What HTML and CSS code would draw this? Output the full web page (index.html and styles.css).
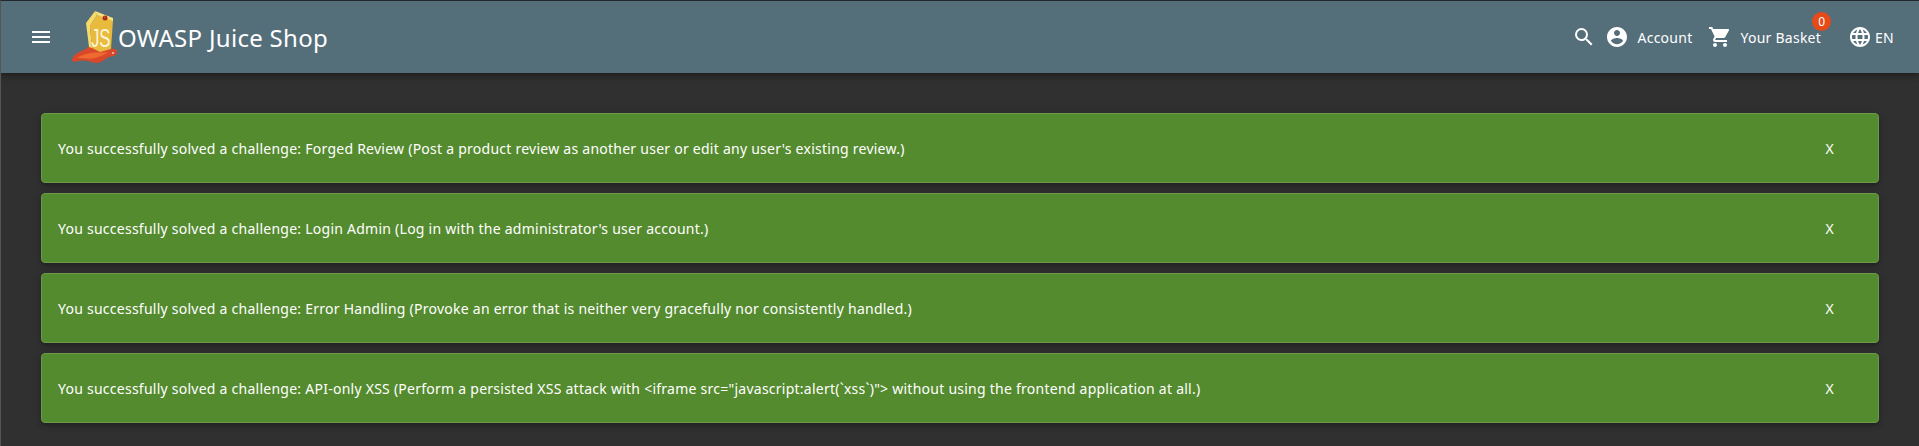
FILE: index.html
```html
<!DOCTYPE html>
<html lang="en">
<head>
    <meta charset="UTF-8">
    <title>OWASP Juice Shop</title>
    <link rel="stylesheet" href="styles.css">
</head>
<body>
<header class="toolbar">
    <button class="menu-btn" aria-label="Open sidenav">
        <svg class="icon" viewBox="0 0 24 24"><path d="M3 18h18v-2H3v2zm0-5h18v-2H3v2zm0-7v2h18V6H3z"/></svg>
    </button>
    <a class="brand">
        <svg class="logo" viewBox="70 9 48 56">
            <path d="M72 60c1-5 6-8 12-10 3-2 5-4 8-3l8 3 12-1c3-1 5 0 5 3s-3 4-6 4.500c-4 .5-6 3.500-10 5.500-4 1.500-8 1-11-.5-4-1.500-9-1.500-14 0-2 .5-4 0-4-1.500z" fill="#d9482a"/>
            <path d="M77 58c4-3 9-4 14-5 6-1 11 0 17-1-3 3-8 4-13 6-6 1.500-12 0-18 0z" fill="#ee6a30"/>
            <path d="M86 23 95 11l2 4-7 11 2 22-3-1z" fill="#f6da68"/>
            <path d="M90 26l7-11 16 5-2 29-11 3-8-4z" fill="#e8bb3f"/>
            <path d="M95 11l18 7v3l-16-6z" fill="#f8e07a"/>
            <circle cx="105" cy="18" r="2.500" fill="#a92c1b"/>
            <circle cx="104.500" cy="17.300" r=".8" fill="#e8563a"/>
            <circle cx="113" cy="53" r=".9" fill="#fbd9c8"/>
            <text class="logo-js" transform="translate(91 46.500) scale(.67 1)">JS</text>
        </svg>
        <span class="brand-name">OWASP Juice Shop</span>
    </a>
    <div class="spacer"></div>
    <svg class="icon" viewBox="0 0 24 24"><path d="M15.500 14h-.79l-.28-.27A6.470 6.470 0 0 0 16 9.500 6.500 6.500 0 1 0 9.500 16c1.610 0 3.090-.59 4.230-1.570l.27.28v.79l5 4.990L20.490 19l-4.990-5zm-6 0C7.010 14 5 11.990 5 9.500S7.010 5 9.500 5 14 7.010 14 9.500 11.990 14 9.500 14z"/></svg>
    <button class="nav-btn account-btn">
        <svg class="icon" viewBox="0 0 24 24"><path d="M12 2C6.480 2 2 6.480 2 12s4.480 10 10 10 10-4.480 10-10S17.520 2 12 2zm0 3c1.660 0 3 1.340 3 3s-1.340 3-3 3-3-1.340-3-3 1.340-3 3-3zm0 14.200c-2.500 0-4.710-1.280-6-3.220.03-1.990 4-3.080 6-3.080 1.990 0 5.970 1.090 6 3.080-1.290 1.940-3.500 3.220-6 3.220z"/></svg>
        <span>Account</span>
    </button>
    <button class="nav-btn basket-btn">
        <svg class="icon" viewBox="0 0 24 24"><path d="M7 18c-1.100 0-1.990.9-1.990 2S5.900 22 7 22s2-.9 2-2-.9-2-2-2zM1 2v2h2l3.600 7.590-1.350 2.450c-.16.280-.25.610-.25.960 0 1.100.9 2 2 2h12v-2H7.420c-.14 0-.25-.11-.25-.25l.03-.12.900-1.630h7.450c.75 0 1.410-.41 1.750-1.030l3.580-6.490A1 1 0 0 0 20 4H5.210l-.94-2H1zm16 16c-1.100 0-1.990.9-1.990 2s.89 2 1.990 2 2-.9 2-2-.9-2-2-2z"/></svg>
        <span>Your Basket</span>
        <span class="badge">0</span>
    </button>
    <button class="nav-btn lang-btn">
        <svg class="icon" viewBox="0 0 24 24"><path d="M11.990 2C6.470 2 2 6.480 2 12s4.470 10 9.990 10C17.520 22 22 17.520 22 12S17.520 2 11.990 2zm6.930 6h-2.950a15.650 15.650 0 0 0-1.380-3.560A8.030 8.030 0 0 1 18.920 8zM12 4.040c.83 1.200 1.480 2.530 1.910 3.960h-3.820c.43-1.430 1.080-2.760 1.910-3.960zM4.260 14C4.100 13.360 4 12.690 4 12s.1-1.360.26-2h3.380c-.08.660-.14 1.320-.14 2s.06 1.340.14 2H4.260zm.82 2h2.950c.32 1.250.78 2.450 1.380 3.560A7.987 7.987 0 0 1 5.080 16zm2.950-8H5.080a7.987 7.987 0 0 1 4.330-3.560A15.650 15.650 0 0 0 8.030 8zM12 19.960c-.83-1.200-1.480-2.530-1.910-3.960h3.820c-.43 1.430-1.080 2.760-1.910 3.960zM14.340 14H9.660c-.09-.66-.16-1.320-.16-2s.07-1.350.16-2h4.680c.09.650.16 1.320.16 2s-.07 1.340-.16 2zm.25 5.560c.6-1.110 1.060-2.310 1.380-3.560h2.950a8.030 8.030 0 0 1-4.330 3.560zM16.360 14c.08-.66.14-1.320.14-2s-.06-1.340-.14-2h3.380c.16.640.26 1.310.26 2s-.1 1.360-.26 2h-3.380z"/></svg>
        <span>EN</span>
    </button>
</header>
<main class="content">
    <div class="banner">
        <span class="banner-text">You successfully solved a challenge: Forged Review (Post a product review as another user or edit any user's existing review.)</span>
        <span class="banner-close">X</span>
    </div>
    <div class="banner">
        <span class="banner-text">You successfully solved a challenge: Login Admin (Log in with the administrator's user account.)</span>
        <span class="banner-close">X</span>
    </div>
    <div class="banner">
        <span class="banner-text">You successfully solved a challenge: Error Handling (Provoke an error that is neither very gracefully nor consistently handled.)</span>
        <span class="banner-close">X</span>
    </div>
    <div class="banner">
        <span class="banner-text">You successfully solved a challenge: API-only XSS (Perform a persisted XSS attack with &lt;iframe src="javascript:alert(`xss`)"&gt; without using the frontend application at all.)</span>
        <span class="banner-close">X</span>
    </div>
</main>
</body>
</html>
```
FILE: styles.css
```css
html, body {
    height: 100%;
    margin: 0;
}

body {
    box-sizing: border-box;
    border-top: 1px solid #23282b;
    border-left: 1px solid #555;
    background-color: #303030;
    color: #fff;
    font-family: "Noto Sans", sans-serif;
    font-size: 14px;
    letter-spacing: .25px;
    overflow: hidden;
}

button {
    background: none;
    border: 0;
    padding: 0;
    color: inherit;
    font: inherit;
    letter-spacing: inherit;
}

.icon {
    width: 24px;
    height: 24px;
    fill: currentColor;
    flex: none;
    display: block;
}

.toolbar {
    display: flex;
    align-items: center;
    height: 72px;
    box-sizing: border-box;
    padding: 0 25px 0 28px;
    background-color: #546e7a;
    box-shadow: 0 2px 4px -1px rgba(0, 0, 0, .2), 0 4px 5px rgba(0, 0, 0, .14), 0 1px 10px rgba(0, 0, 0, .12);
}

.menu-btn {
    width: 24px;
    height: 24px;
}

.brand {
    display: flex;
    align-items: center;
    margin-left: 17px;
}

.logo {
    width: 48px;
    height: 56px;
    flex: none;
}

.logo-js {
    font-family: "Liberation Sans", sans-serif;
    font-size: 25px;
    letter-spacing: 0;
    fill: #fff6d8;
}

.brand-name {
    font-size: 24px;
    letter-spacing: .3px;
}

.spacer {
    flex: 1;
}

.nav-btn {
    display: flex;
    align-items: center;
    gap: 8px;
    position: relative;
}

.nav-btn span {
    white-space: nowrap;
}

.account-btn {
    margin-left: 9px;
}

.basket-btn {
    margin-left: 16px;
}

.lang-btn {
    margin-left: 27px;
    gap: 3px;
}

.nav-btn .badge {
    position: absolute;
    top: -13px;
    right: -10px;
    width: 19px;
    height: 19px;
    border-radius: 50%;
    background-color: #e64a19;
    font-size: 12px;
    line-height: 19px;
    letter-spacing: 0;
    text-align: center;
}

.content {
    display: flex;
    flex-direction: column;
    gap: 10px;
    padding: 40px 40px 0;
}

.banner {
    display: flex;
    align-items: center;
    justify-content: space-between;
    height: 70px;
    box-sizing: border-box;
    padding: 0 44px 0 16px;
    background-color: #558b2f;
    border: 1px solid #6b9a4a;
    border-radius: 4px;
    box-shadow: 0 3px 3px -2px rgba(0, 0, 0, .2), 0 3px 4px rgba(0, 0, 0, .14), 0 1px 8px rgba(0, 0, 0, .12);
}
```
